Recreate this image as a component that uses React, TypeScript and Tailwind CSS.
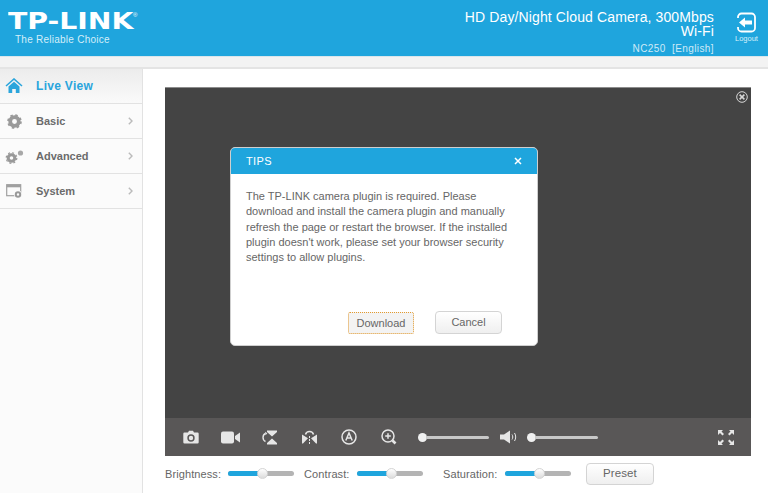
import { ReactNode } from "react";

const sans = "font-['Liberation_Sans',Arial,sans-serif]";

function NavItem({ icon, label, active, arrow = true }: { icon: ReactNode; label: string; active?: boolean; arrow?: boolean }) {
  return (
    <div className={`h-[35px] flex items-center border-b border-[#e2e2e2] ${active ? "bg-gradient-to-b from-[#ececec] to-[#fafafa]" : "bg-[#fbfbfb]"}`}>
      <div className="w-[36px] flex justify-center pr-[8px] shrink-0">{icon}</div>
      <span className={`font-bold ${active ? "text-[12px] tracking-[0.3px] text-[#2aa5dc]" : "text-[11px] pt-[1px] text-[#6b6b6b]"}`}>{label}</span>
      {arrow && (
        <svg width="5" height="8" viewBox="0 0 5 8" className="ml-auto mr-[9px]">
          <path d="M.8 .8L4 4 .8 7.200" fill="none" stroke="#bbb" strokeWidth="1.4" />
        </svg>
      )}
    </div>
  );
}

function Gear({ size = 15, fill = "#9a9a9a" }: { size?: number; fill?: string }) {
  return (
    <svg width={size} height={size} viewBox="0 0 16 16">
      <circle cx="8" cy="8" r="4.600" fill="none" stroke={fill} strokeWidth="4" />
      <circle cx="8" cy="8" r="6.900" fill="none" stroke={fill} strokeWidth="1.800" strokeDasharray="2.700 2.720" />
    </svg>
  );
}

function BlueSlider({ pct = 50 }: { pct?: number }) {
  return (
    <div className="relative w-[66px] h-[5px] rounded-full bg-[#b4b4b4] -mt-[2px]">
      <div className="h-full rounded-full bg-[#1fa5dd]" style={{ width: `${pct}%` }} />
      <div
        className="absolute top-[-3px] w-[11px] h-[11px] -ml-[5px] rounded-full bg-gradient-to-b from-white to-[#dcdcdc] border border-[#d5d5d5]"
        style={{ left: `${pct + 2}%` }}
      />
    </div>
  );
}

function ToolSlider() {
  return (
    <div className="w-[71px] flex items-center">
      <div className="w-[9px] h-[9px] rounded-full bg-[#f0f0f0] shrink-0" />
      <div className="flex-1 h-[3px] -ml-px rounded-r-full bg-[#c8c8c8]" />
    </div>
  );
}

const ic = "#e6e6e6";

function ToolIcon({ children }: { children: ReactNode }) {
  return <div className="w-[39.6px] flex justify-center shrink-0">{children}</div>;
}

export default function App() {
  return (
    <div className={`w-[768px] h-[493px] overflow-hidden bg-white flex flex-col ${sans}`}>
      <header className="h-[56px] shrink-0 bg-[#1fa5dd] flex text-white">
        <div className="pl-[8px] pt-[9px]">
          <div className="flex items-start w-[132px]">
            <span className="font-['DejaVu_Sans',sans-serif] font-bold text-[23px] leading-[24px] origin-left scale-x-[1.23] block w-[118px] shrink-0">TP-LINK</span>
            <span className="text-[6px] leading-[8px] mt-[2px] ml-[7px]">®</span>
          </div>
          <div className="pl-[7px] text-[10px] leading-[12px] mt-[1px] tracking-[0.25px] text-[#d4eef9]">The Reliable Choice</div>
        </div>
        <div className="ml-auto pt-[10px] text-right">
          <div className="text-[14px] leading-[14px] tracking-[0.12px] w-[262px]">HD Day/Night Cloud Camera, 300Mbps Wi-Fi</div>
          <div className="text-[10px] leading-[12px] mt-[5px] tracking-[0.4px] text-[#cfeaf7] whitespace-pre">NC250  [English]</div>
        </div>
        <div className="w-[54px] shrink-0 pt-[12px] flex flex-col items-center pl-[11px]">
          <svg width="21" height="21" viewBox="0 0 21 21">
            <path d="M2 6V5a3.500 3.500 0 0 1 3.500-3.500h10A3.500 3.500 0 0 1 19 5v11a3.500 3.500 0 0 1-3.500 3.500h-10A3.500 3.500 0 0 1 2 16v-1" fill="none" stroke="#fff" strokeWidth="1.800" />
            <path d="M3 10.500l6-5v3h7v4H9v3z" fill="#fff" />
          </svg>
          <span className="text-[7.500px] leading-[8px] mt-[2px] text-[#d9f0fa]">Logout</span>
        </div>
      </header>

      <div className="h-[13px] shrink-0 bg-[#f3f3f3] border-t border-[#d9e6ec] border-b-2 border-b-[#e4e4e4]" />

      <div className="flex-1 flex min-h-0">
        <aside className="w-[143px] shrink-0 border-r border-[#e2e2e2] bg-[#fbfbfb]">
          <NavItem
            active
            arrow={false}
            label="Live View"
            icon={
              <svg width="18" height="16" viewBox="0 0 18 16">
                <path d="M1 8l8-7 8 7" fill="none" stroke="#2aa5dc" strokeWidth="1.600" />
                <path d="M3.500 8.500L9 3.800l5.500 4.700V15h-3.700v-4H7.200v4H3.500z" fill="#2aa5dc" />
              </svg>
            }
          />
          <NavItem label="Basic" icon={<Gear />} />
          <NavItem
            label="Advanced"
            icon={
              <svg width="19" height="15" viewBox="0 0 19 15">
                <circle cx="6.500" cy="9" r="3.300" fill="none" stroke="#999" strokeWidth="3" />
                <circle cx="6.500" cy="9" r="5.300" fill="none" stroke="#999" strokeWidth="1.200" strokeDasharray="2 2.160" />
                <circle cx="15.500" cy="4" r="2.600" fill="#a8a8a8" />
              </svg>
            }
          />
          <NavItem
            label="System"
            icon={
              <svg width="17" height="15" viewBox="0 0 17 15">
                <rect x="0.700" y="0.700" width="14" height="11" fill="#fbfbfb" stroke="#a0a0a0" strokeWidth="1.200" />
                <rect x="0.700" y="0.700" width="14" height="2.600" fill="#a0a0a0" />
                <circle cx="12" cy="10.500" r="3.900" fill="#fbfbfb" />
                <circle cx="12" cy="10.500" r="2.200" fill="none" stroke="#999" strokeWidth="2" />
              </svg>
            }
          />
        </aside>

        <main className="flex-1 min-w-0 pl-[22px] pr-[17px] pt-[18px]">
          <div className="h-[369px] flex flex-col border-t border-[#8c8c8c]">
            <div className="relative flex-1 bg-[#444444]">
              <svg width="12" height="12" viewBox="0 0 12 12" className="absolute top-[3px] right-[3px]">
                <circle cx="6" cy="6" r="5.300" fill="none" stroke="#d8d8d8" strokeWidth="1" />
                <path d="M3.600 3.600l4.800 4.800M8.400 3.600L3.600 8.400" stroke="#d8d8d8" strokeWidth="1.500" />
              </svg>

              <div className="absolute left-[65px] top-[59px] w-[308px] h-[199px] flex flex-col rounded-[5px] overflow-hidden bg-white border border-[#cfcfcf]">
                <div className="h-[26px] shrink-0 bg-[#1fa5dd] flex items-center justify-between pl-[15px] pr-[15px] text-white">
                  <span className="text-[11px] tracking-[0.4px]">TIPS</span>
                  <svg width="8" height="8" viewBox="0 0 8 8">
                    <path d="M1 1l6 6M7 1L1 7" stroke="#fff" strokeWidth="1.500" />
                  </svg>
                </div>
                <p className="px-[15px] pt-[15px] text-[11px] leading-[15.300px] text-[#666]">
                  The TP-LINK camera plugin is required. Please download and install the camera plugin and manually refresh the page or restart the browser. If the installed plugin doesn't work, please set your browser security settings to allow plugins.
                </p>
                <div className="mt-auto pb-[11px] pl-[117px] flex items-end gap-[21px] text-[11px] text-[#666]">
                  <button className="w-[66px] h-[22px] rounded-[2px] bg-[#f3f3f3] border border-dotted border-[#e39a2e]">Download</button>
                  <button className="w-[67px] h-[23px] rounded-[4px] bg-gradient-to-b from-white to-[#efefef] border border-[#d4d4d4]">Cancel</button>
                </div>
              </div>
            </div>

            <div className="h-[38px] shrink-0 bg-[#595757] flex items-center pl-[6px] pr-[17px]">
              <ToolIcon>
                <svg width="16" height="14" viewBox="0 0 16 14">
                  <path fillRule="evenodd" fill={ic} d="M1.500 2.500H5L6 .7h4l1 1.800h3.500A1.200 1.200 0 0 1 15.700 3.700v8.600a1.200 1.200 0 0 1-1.200 1.200h-13A1.200 1.200 0 0 1 .3 12.300V3.700a1.200 1.200 0 0 1 1.200-1.200zM8 4.300a3.700 3.700 0 1 0 0 7.400 3.700 3.700 0 0 0 0-7.400zm0 1.500a2.200 2.200 0 1 1 0 4.400 2.200 2.200 0 0 1 0-4.400z" />
                </svg>
              </ToolIcon>
              <ToolIcon>
                <svg width="19" height="13" viewBox="0 0 19 13">
                  <rect x="0" y="0.500" width="13" height="12" rx="2" fill={ic} />
                  <path d="M14 5l5-3.500v10L14 8z" fill={ic} />
                </svg>
              </ToolIcon>
              <ToolIcon>
                <svg width="15" height="15" viewBox="0 0 15 15">
                  <path d="M5 .5h10v1.500L10 6.500 5 2zM5 14.500h10V13L10 8.500 5 13z" fill={ic} />
                  <path d="M3.500 3.500C.2 5 .2 10 3.500 11.500" fill="none" stroke={ic} strokeWidth="1.400" />
                  <path d="M3 1.800l2.300 1.400-1.600 2z" fill={ic} />
                </svg>
              </ToolIcon>
              <ToolIcon>
                <svg width="15" height="14" viewBox="0 0 15 14">
                  <path d="M0 4.500l6 3.800L1 13.500H0zM15 4.500L9 8.300l5 5.200h1z" fill={ic} />
                  <path d="M3.500 4.500C4.500 .5 10.500 .5 11.500 4.500" fill="none" stroke={ic} strokeWidth="1.500" />
                  <path d="M7.500 6v8" stroke={ic} strokeWidth="1" strokeDasharray="2 1" />
                </svg>
              </ToolIcon>
              <ToolIcon>
                <svg width="16" height="16" viewBox="0 0 16 16">
                  <circle cx="8" cy="8" r="7" fill="none" stroke={ic} strokeWidth="1.500" />
                  <path d="M4.800 11.500L8 4l3.200 7.500M5.900 9h4.200" fill="none" stroke={ic} strokeWidth="1.500" />
                </svg>
              </ToolIcon>
              <ToolIcon>
                <svg width="16" height="16" viewBox="0 0 16 16">
                  <circle cx="7" cy="7" r="6" fill="none" stroke={ic} strokeWidth="1.500" />
                  <path d="M4.200 7h5.600M7 4.200v5.600" stroke={ic} strokeWidth="1.500" />
                  <path d="M11.500 11.500L14.500 14.500" stroke={ic} strokeWidth="2.600" />
                </svg>
              </ToolIcon>
              <div className="ml-[9px]">
                <ToolSlider />
              </div>
              <svg width="17" height="14" viewBox="0 0 17 14" className="ml-[11px] mr-[10px]">
                <path d="M0 4.500h4L10 .5v13l-6-4H0z" fill={ic} />
                <path d="M12 4.500c1 1.500 1 3.500 0 5M14.500 3c1.600 2.500 1.600 5.500 0 8" fill="none" stroke={ic} strokeWidth="1" />
              </svg>
              <ToolSlider />
              <svg width="16" height="15" viewBox="0 0 16 15" className="ml-auto">
                <path d="M0 0h5L3.500 1.500 6 4 4.500 5.500 2 3 0 5zM16 0h-5l1.500 1.500L10 4l1.500 1.500L14 3l2 2zM0 15h5l-1.500-1.500L6 11 4.500 9.500 2 12l-2-2zM16 15h-5l1.500-1.500L10 11l1.500-1.500L14 12l2-2z" fill={ic} />
              </svg>
            </div>
          </div>

          <div className="h-[37px] flex items-center text-[11px] tracking-[0.1px] text-[#666]">
            <span className="w-[63px] -mt-[1px]">Brightness:</span>
            <BlueSlider />
            <span className="ml-[10px] w-[53px] -mt-[1px]">Contrast:</span>
            <BlueSlider />
            <span className="ml-[20px] w-[62px] -mt-[1px]">Saturation:</span>
            <BlueSlider />
            <button className="ml-[15px] w-[68px] h-[22px] -mt-[1px] rounded-[4px] bg-gradient-to-b from-white to-[#efefef] border border-[#d4d4d4] text-[11.500px]">Preset</button>
          </div>
        </main>
      </div>
    </div>
  );
}
